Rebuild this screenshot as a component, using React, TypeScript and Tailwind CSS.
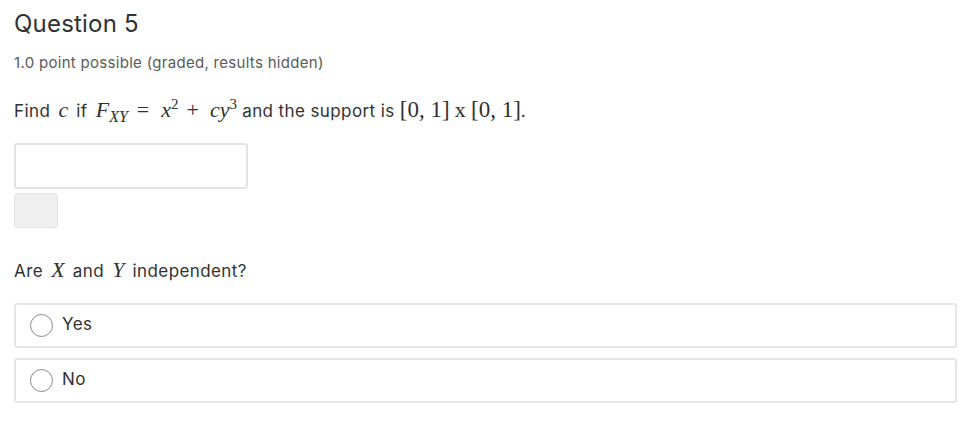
import React from 'react';

const M: React.FC<{ children: React.ReactNode; italic?: boolean; className?: string }> = ({ children, italic = true, className = '' }) => (
  <span
    className={`font-['Liberation_Serif',serif] text-[22px] tracking-normal ${italic ? 'mx-[3px] italic' : ''} ${className}`}
  >
    {children}
  </span>
);

const Option: React.FC<{ label: string }> = ({ label }) => (
  <label className="flex h-[45px] items-center rounded-[3px] border-2 border-[#e5e5e5] pl-[14px]">
    <span className="h-[23px] w-[23px] rounded-full border border-[#8a8a8a] bg-white" />
    <span className="ml-[9px] text-[17px] tracking-[0.4px] text-[#313131]">{label}</span>
  </label>
);

export default function App() {
  return (
    <div className="min-h-screen bg-white pl-[14px] pr-[10px] pt-[6px] font-['Inter',sans-serif] text-[#313131]">
      <h2 className="text-[24px] leading-[36px] tracking-[0.2px] text-[#313131]">Question 5</h2>
      <div className="mt-[10px] text-[15px] tracking-[0.3px] text-[#5a5a5a]">1.0 point possible (graded, results hidden)</div>

      <p className="mt-[21px] text-[17px] leading-[28px] tracking-[0.4px]">
        Find <M>c</M> if <M className="mr-0">F</M>
        <span className="relative top-[5px] font-['Liberation_Serif',serif] text-[16px] italic tracking-normal">XY</span>
        <M italic={false} className="mx-[9px]">=</M>
        <M className="mr-0">x</M>
        <sup className="font-['Liberation_Serif',serif] text-[15px] tracking-normal">2</sup>
        <M italic={false} className="mx-[8px]">+</M>
        <M className="mr-0">cy</M>
        <sup className="font-['Liberation_Serif',serif] text-[15px] tracking-normal">3</sup> and the support is{' '}
        <M italic={false} className="text-[23px]">[0, 1]</M> <M italic={false}>x</M>{' '}
        <M italic={false} className="text-[23px]">[0, 1]</M>.
      </p>

      <input
        type="text"
        className="mt-[17px] block h-[46px] w-[234px] rounded-[3px] border-2 border-[#e3e3e3] bg-white outline-none"
      />
      <button className="mt-[4px] block h-[35px] w-[44px] rounded-[4px] border border-[#e3e3e3] bg-[#efefef]" />

      <p className="mt-[28px] text-[17px] leading-[28px] tracking-[0.4px]">
        Are <M>X</M> and <M>Y</M> independent?
      </p>

      <div className="mt-[18px] flex flex-col gap-[10px]">
        <Option label="Yes" />
        <Option label="No" />
      </div>
    </div>
  );
}
